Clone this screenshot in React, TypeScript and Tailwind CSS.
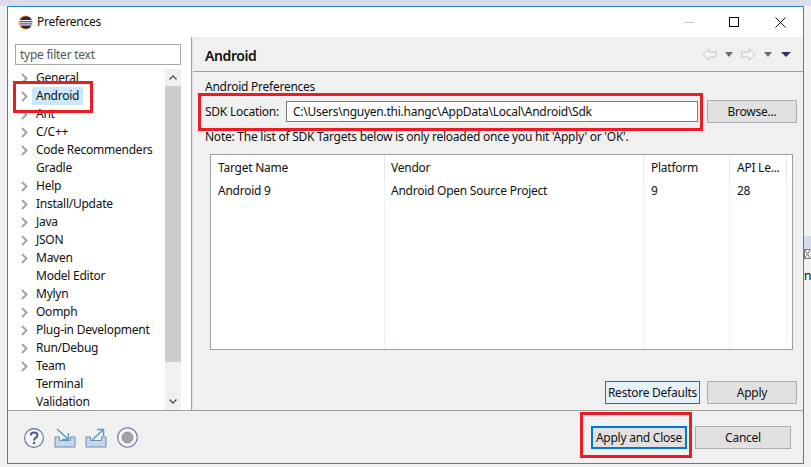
const treeItems = [
  { name: "General", arrow: true },
  { name: "Android", arrow: true, selected: true },
  { name: "Ant", arrow: true },
  { name: "C/C++", arrow: true },
  { name: "Code Recommenders", arrow: true },
  { name: "Gradle", arrow: false },
  { name: "Help", arrow: true },
  { name: "Install/Update", arrow: true },
  { name: "Java", arrow: true },
  { name: "JSON", arrow: true },
  { name: "Maven", arrow: true },
  { name: "Model Editor", arrow: false },
  { name: "Mylyn", arrow: true },
  { name: "Oomph", arrow: true },
  { name: "Plug-in Development", arrow: true },
  { name: "Run/Debug", arrow: true },
  { name: "Team", arrow: true },
  { name: "Terminal", arrow: false },
  { name: "Validation", arrow: false },
];

const columns = [
  { title: "Target Name", value: "Android 9", width: "w-[174px]", pad: "pl-[7px]" },
  { title: "Vendor", value: "Android Open Source Project", width: "w-[259px]", pad: "pl-[6px]" },
  { title: "Platform", value: "9", width: "w-[86px]", pad: "pl-[7px]" },
  { title: "API Le...", value: "28", width: "w-[57px]", pad: "pl-[7px]" },
];

function EclipseLogo() {
  return (
    <svg width="15" height="15" viewBox="0 0 15 15">
      <circle cx="7.5" cy="7.5" r="7" fill="#f7941e" />
      <circle cx="8" cy="7.5" r="6.2" fill="#2c2255" />
      <rect x="1" y="5" width="13.5" height="1.2" fill="#fff" />
      <rect x="1" y="7.2" width="13.5" height="1.2" fill="#fff" />
      <rect x="1.5" y="9.4" width="13" height="1.1" fill="#fff" />
    </svg>
  );
}

function Chevron() {
  return (
    <svg width="7" height="11" viewBox="0 0 7 11" fill="none">
      <path d="M1 1l4.5 4.5L1 10" stroke="#a0a0a0" strokeWidth="1.8" />
    </svg>
  );
}

function NavArrow({ flip }: { flip?: boolean }) {
  return (
    <svg width="15" height="13" viewBox="0 0 15 13" fill="#f4f4f4" className={flip ? "-scale-x-100" : ""}>
      <path d="M7 .8L1 6.5l6 5.7V9h7.2V4H7z" stroke="#c4c4c4" strokeWidth="1" />
    </svg>
  );
}

function DropArrow({ color, wide }: { color: string; wide?: boolean }) {
  return (
    <svg width={wide ? 10 : 8} height="5" viewBox="0 0 8 5" preserveAspectRatio="none">
      <path d="M0 0h8L4 5z" fill={color} />
    </svg>
  );
}

function TrayIcon({ out }: { out?: boolean }) {
  return (
    <svg width="22" height="20" viewBox="0 0 22 20" fill="none">
      <path d="M1 9v10h20V9h-4.5v3.5h-11V9z" fill="#c5d6ea" stroke="#6f8db3" strokeWidth="1" />
      {out ? (
        <path d="M7 12l11-10M12 1.5h6.5V8" stroke="#5a9bc9" strokeWidth="1.5" />
      ) : (
        <path d="M3 1l11 10M14.5 5v6.5H8" stroke="#5a9bc9" strokeWidth="1.5" />
      )}
    </svg>
  );
}

function Button({ label, className }: { label: string; className?: string }) {
  return (
    <button className={`flex h-[23px] items-center justify-center whitespace-nowrap text-[12px] tracking-[-0.25px] text-[#111] ${className ?? "border border-[#adadad] bg-[#e1e1e1]"}`}>
      {label}
    </button>
  );
}

export default function App() {
  return (
    <div className="relative h-[467px] w-[811px] overflow-hidden bg-[#f2f2f4] pl-[7px] pt-[6px] font-['Noto_Sans',sans-serif] text-[12px] leading-[16px] tracking-[-0.25px] text-[#111]">
      <div className="absolute inset-x-0 top-0 h-[6px] bg-[#dcdde8]" />

      <div className="relative flex h-[458px] w-[797px] flex-col border border-[#2b86d4] bg-[#f0f0f0]">
        <div className="flex h-[30px] shrink-0 items-center gap-[4px] bg-white pl-[10px]">
          <EclipseLogo />
          <span>Preferences</span>
          <div className="ml-auto flex items-center">
            <div className="mr-[35px] h-px w-[10px] bg-[#c8c8c8]" />
            <div className="mr-[36px] h-[10px] w-[10px] border border-black" />
            <svg width="11" height="11" viewBox="0 0 11 11" className="mr-[17px]">
              <path d="M.5.5l10 10M10.5.5l-10 10" stroke="#111" strokeWidth="1" />
            </svg>
          </div>
        </div>

        <div className="flex h-[373px] shrink-0">
          <div className="flex w-[184px] shrink-0 flex-col border-r border-[#a0a0a0] bg-white pl-[7px] pr-[9px] pt-[7px]">
            <input
              readOnly
              value="type filter text"
              className="h-[21px] w-[166px] shrink-0 border border-[#a9a9a9] bg-white px-[4px] text-[12px] tracking-[-0.25px] text-[#555] outline-none"
            />
            <div className="mt-[4px] flex min-h-0 flex-1">
              <div className="w-[150px] shrink-0 overflow-hidden">
                {treeItems.map((item) => (
                  <div key={item.name} className="flex h-[18px] items-center whitespace-nowrap">
                    <div className="flex w-[17px] shrink-0 justify-center pl-[1px]">
                      {item.arrow && <Chevron />}
                    </div>
                    <span className={`flex h-[18px] items-center pl-[4px] pr-[4px] ${item.selected ? "bg-[#cce8ff]" : ""}`}>
                      {item.name}
                    </span>
                  </div>
                ))}
              </div>
              <div className="flex w-[16px] shrink-0 flex-col bg-[#f0f0f0]">
                <div className="flex h-[17px] shrink-0 items-center justify-center">
                  <svg width="8" height="5" viewBox="0 0 8 5" fill="none">
                    <path d="M.5 4.5L4 1l3.5 3.5" stroke="#555" strokeWidth="1.4" />
                  </svg>
                </div>
                <div className="h-[276px] bg-[#cdcdcd]" />
                <div className="mt-auto flex h-[17px] items-center justify-center">
                  <svg width="8" height="5" viewBox="0 0 8 5" fill="none">
                    <path d="M.5.5L4 4l3.5-3.5" stroke="#555" strokeWidth="1.4" />
                  </svg>
                </div>
              </div>
            </div>
          </div>

          <div className="flex min-w-0 flex-1 flex-col border-l border-[#e0e0e0]">
            <div className="flex h-[35px] shrink-0 items-center border-b border-[#a0a0a0] pl-[12px] pr-[12px]">
              <span className="mt-[4px] text-[14px] font-semibold tracking-[-0.4px]">Android</span>
              <div className="mt-[1px] ml-auto flex items-center">
                <NavArrow />
                <div className="ml-[8px]"><DropArrow color="#6d6d6d" /></div>
                <div className="ml-[8px]"><NavArrow flip /></div>
                <div className="ml-[8px]"><DropArrow color="#6d6d6d" /></div>
                <div className="ml-[9px]"><DropArrow color="#3d2a6b" wide /></div>
              </div>
            </div>

            <div className="flex min-h-0 flex-1 flex-col pl-[12px] pr-[6px] pt-[7px]">
              <div>Android Preferences</div>
              <div className="mt-[5px] flex h-[23px] items-center">
                <span className="w-[81px] shrink-0">SDK Location:</span>
                <div className="flex h-[21px] w-[412px] items-center border border-[#7a7a7a] bg-white pl-[6px]">
                  C:\Users\nguyen.thi.hangc\AppData\Local\Android\Sdk
                </div>
                <Button label="Browse..." className="ml-[9px] w-[90px] border border-[#adadad] bg-[#e1e1e1]" />
              </div>
              <div className="mt-[6px]">Note: The list of SDK Targets below is only reloaded once you hit 'Apply' or 'OK'.</div>

              <div className="ml-[5px] mt-[9px] flex h-[196px] w-[583px] shrink-0 border border-[#a0a0a0] bg-white">
                {columns.map((col) => (
                  <div key={col.title} className={`flex shrink-0 flex-col ${col.width}`}>
                    <div className={`flex h-[26px] items-center truncate border-r border-[#e5e5e5] ${col.pad}`}>{col.title}</div>
                    <div className={`flex-1 border-r border-[#eaf2fb] pt-[1px] ${col.pad}`}>
                      <div className="flex h-[18px] items-center">{col.value}</div>
                    </div>
                  </div>
                ))}
              </div>

              <div className="mt-[31px] flex justify-end gap-[7px]">
                <Button label="Restore Defaults" className="w-[95px] border border-[#0078d7] bg-[#e5f1fb]" />
                <Button label="Apply" className="w-[90px] border border-[#adadad] bg-[#e1e1e1]" />
              </div>
            </div>
          </div>
        </div>

        <div className="flex flex-1 items-center border-t border-[#a0a0a0] pl-[16px] pr-[12px] pt-[1px]">
          <div className="flex items-center">
            <svg width="20" height="20" viewBox="0 0 20 20" fill="none">
              <circle cx="10" cy="10" r="9.4" fill="#f6f7f9" stroke="#5d7196" strokeWidth="1.1" />
              <path d="M6.8 7.6c0-4.2 6.6-4.2 6.6-.2 0 2.6-3.3 2.4-3.3 5" stroke="#4a5d80" strokeWidth="2" />
              <circle cx="10.1" cy="15" r="1.3" fill="#4a5d80" />
            </svg>
            <div className="ml-[10px]"><TrayIcon /></div>
            <div className="ml-[9px]"><TrayIcon out /></div>
            <svg width="21" height="21" viewBox="0 0 21 21" fill="none" className="ml-[10px]">
              <circle cx="10.5" cy="10.5" r="9.8" fill="#f4f4f4" stroke="#5d7196" strokeWidth="1.1" />
              <circle cx="10.5" cy="10.5" r="5.4" fill="#a2a2a2" stroke="#8c8c8c" />
            </svg>
          </div>
          <div className="ml-auto flex gap-[8px]">
            <Button label="Apply and Close" className="w-[96px] border-2 border-[#0078d7] bg-[#e1e1e1]" />
            <Button label="Cancel" className="w-[96px] border border-[#adadad] bg-[#e1e1e1]" />
          </div>
        </div>
      </div>

      {/* red annotation boxes drawn over the dialog */}
      <div className="absolute left-[13px] top-[81px] h-[32px] w-[80px] border-[3px] border-[#ed1c24]" />
      <div className="absolute left-[198px] top-[93px] h-[38px] w-[505px] border-[3px] border-[#ed1c24]" />
      <div className="absolute left-[580px] top-[412px] h-[46px] w-[112px] border-[3px] border-[#ed1c24]" />

      {/* bits of the window behind the dialog */}
      <div className="absolute left-[804px] top-[236px] h-[13px] w-[7px] bg-[#d5dbe8]" />
      <svg width="7" height="10" viewBox="0 0 7 10" fill="none" className="absolute left-[804px] top-[249px]">
        <path d="M.5.5h6M.5 9.5h6M.5.5v9M.5.5l6 9M.5 9.5l6-9" stroke="#777" strokeWidth="1" />
      </svg>
      <div className="absolute left-[804px] top-[269px] text-[12px] leading-[14px]">n</div>
    </div>
  );
}
